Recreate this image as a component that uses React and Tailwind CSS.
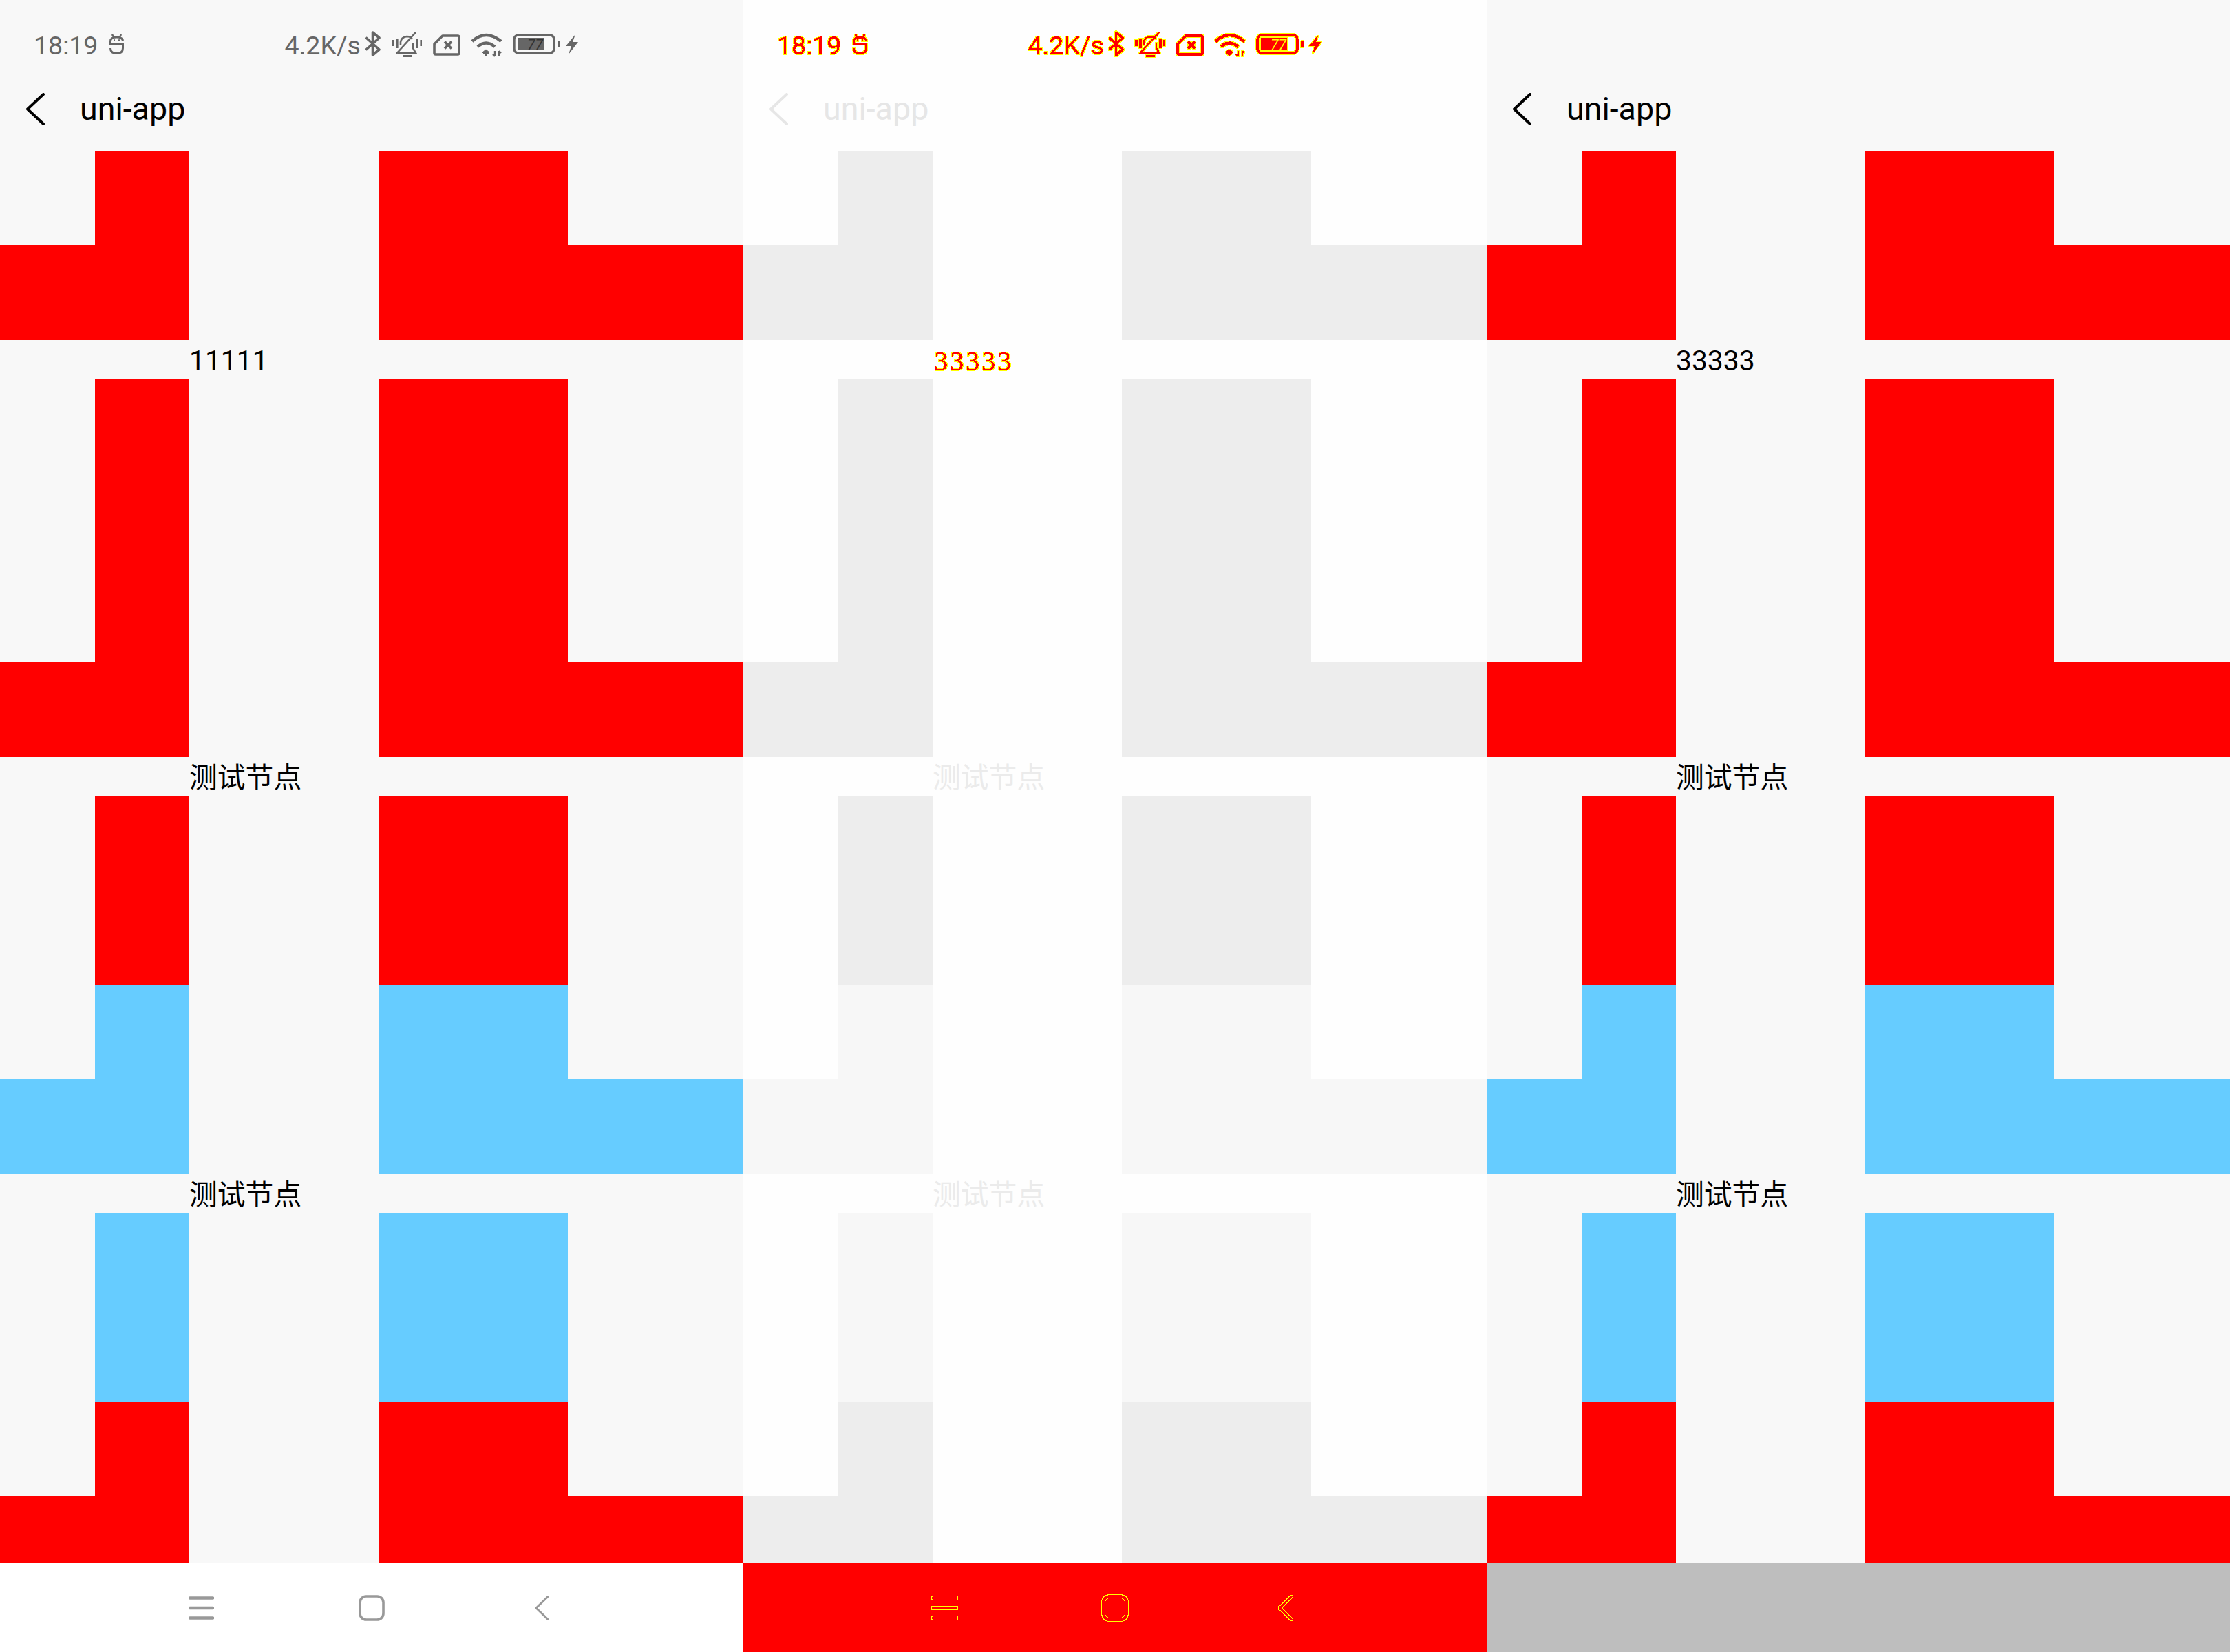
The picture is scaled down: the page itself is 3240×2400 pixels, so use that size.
const red = "bg-[#ff0000]";
const blue = "bg-[#66ccff]";
const fadedRed = "bg-[#ededed]";
const fadedBlue = "bg-[#f7f7f7]";

function Solid({ color, h }) {
  return (
    <div className={`flex ${h}`}>
      <div className="w-[275px] pl-[137.5px]"><div className={`h-full ${color}`} /></div>
      <div className={`ml-[275px] w-[275px] ${color}`} />
    </div>
  );
}

function Ell({ color, h, foot }) {
  return (
    <div className={`flex ${h}`}>
      <div className="flex w-[275px] flex-col">
        <div className="flex-1 pl-[137.5px]"><div className={`h-full ${color}`} /></div>
        <div className={`${foot} ${color}`} />
      </div>
      <div className="ml-[275px] flex w-[530px] flex-col">
        <div className={`w-[275px] flex-1 ${color}`} />
        <div className={`${foot} ${color}`} />
      </div>
    </div>
  );
}

function Label({ children, className }) {
  return <div className={`h-[56px] pl-[275px] text-[40.8px] leading-[60px] ${className}`}>{children}</div>;
}

function Chevron({ className }) {
  return (
    <svg width="28" height="47" viewBox="0 0 28 47" className={className} fill="none" stroke="currentColor" strokeWidth="4" strokeLinecap="round" strokeLinejoin="round">
      <path d="M26 2 L3 23.5 L26 45" />
    </svg>
  );
}

function Robot() {
  return (
    <svg width="23" height="29" viewBox="0 0 23 29" className="ml-[16px] mt-[50px]" fill="none" stroke="currentColor" strokeWidth="3">
      <path d="M5 0 L7 4 M18 0 L16 4" strokeWidth="2.5" />
      <path d="M2.5 13 V10 Q2.5 4 11.5 4 Q20.5 4 20.5 10" />
      <path d="M1 14 H22" />
      <path d="M20.5 14 V20 Q20.5 27.5 11.5 27.5 Q2.5 27.5 2.5 20" />
      <path d="M7 8.5 H9 M14 8.5 H16" strokeWidth="2.5" />
    </svg>
  );
}

function Bluetooth() {
  return (
    <svg width="25" height="37" viewBox="0 0 25 37" className="ml-[5px] mt-[45px]" fill="none" stroke="currentColor" strokeWidth="3.6" strokeLinejoin="round">
      <path d="M2.5 9.5 L22 27 L12.5 35 V2 L22 10 L2.5 27.5" />
    </svg>
  );
}

function Bell() {
  return (
    <svg width="44" height="37" viewBox="0 0 44 37" className="ml-[15px] mt-[47px]" fill="none" stroke="currentColor" strokeWidth="2.6">
      <path d="M2 11 V20 M8 9 V23 M37 9 V23 M43 11 V20" strokeWidth="3.2" />
      <path d="M13 19 V14 Q14 7 22 6 Q28 6 30 10 M31 15 V23 L35 30 H9" />
      <path d="M7 31 L35 0" />
      <path d="M16 34.5 H29" strokeWidth="3" />
    </svg>
  );
}

function Sim() {
  return (
    <svg width="40" height="31" viewBox="0 0 40 31" className="ml-[16px] mt-[50px]" fill="none" stroke="currentColor" strokeWidth="3.6" strokeLinejoin="round">
      <path d="M14 2 H36 Q38 2 38 4 V27 Q38 29 36 29 H4 Q2 29 2 27 V14 Z" />
      <path d="M17 10.5 L27 20.5 M27 10.5 L17 20.5" />
    </svg>
  );
}

function Wifi() {
  return (
    <svg width="47" height="35" viewBox="0 0 47 35" className="ml-[15px] mt-[48px]" fill="none" stroke="currentColor" strokeWidth="4.4">
      <path d="M2 12 Q22 -6 44 12" />
      <path d="M10 20 Q22 9 35 20" />
      <path d="M17 28 L22 24 L27 28 L22 33 Z" fill="currentColor" strokeWidth="1" />
      <path d="M35 26 V34 M32 31 L35 34 M41 34 V26 M44 29 L41 26" strokeWidth="2.4" />
    </svg>
  );
}

function Battery({ numberColor }) {
  return (
    <svg width="69" height="30" viewBox="0 0 69 30" className="ml-[14px] mt-[49px]" fill="none" stroke="currentColor" strokeWidth="3.4">
      <rect x="2" y="2" width="58" height="26" rx="6" />
      <rect x="7" y="6" width="38" height="18" fill="currentColor" stroke="none" />
      <rect x="65" y="10" width="4" height="10" rx="1.5" fill="currentColor" stroke="none" />
      <text x="21" y="23" fontSize="21" fill={numberColor} stroke="none" fontStyle="italic" fontFamily="Roboto, sans-serif">77</text>
    </svg>
  );
}

function Bolt() {
  return (
    <svg width="20" height="29" viewBox="0 0 20 29" className="ml-[7px] mt-[50px]" fill="currentColor">
      <path d="M15 0 L1 17 H9 L5 29 L19 11 H11 Z" />
    </svg>
  );
}

function StatusContent({ numberColor }) {
  return (
    <>
      <span className="ml-[49px] mt-[48px] text-[37.5px] leading-[36px]">18:19</span>
      <Robot />
      <span className="ml-[232px] mt-[48px] text-[37.5px] leading-[36px]">4.2K/s</span>
      <Bluetooth />
      <Bell />
      <Sim />
      <Wifi />
      <Battery numberColor={numberColor} />
      <Bolt />
    </>
  );
}

function NavIcons() {
  return (
    <>
      <svg width="37" height="34" viewBox="0 0 37 34" className="ml-[274px]" fill="none" stroke="currentColor" strokeWidth="4.4" strokeLinecap="round">
        <path d="M2 2.5 H35 M2 17 H35 M2 31.5 H35" />
      </svg>
      <svg width="38" height="38" viewBox="0 0 38 38" className="ml-[210px]" fill="none" stroke="currentColor" strokeWidth="3.6">
        <rect x="2" y="2" width="34" height="34" rx="9" />
      </svg>
      <svg width="21" height="36" viewBox="0 0 21 36" className="ml-[218px]" fill="none" stroke="currentColor" strokeWidth="3" strokeLinecap="round" strokeLinejoin="round">
        <path d="M19 1.5 L2 18 L19 34.5" />
      </svg>
    </>
  );
}

function Body({ first, labelClass, r, b }) {
  return (
    <>
      <Ell color={r} h="h-[275px]" foot="h-[138px]" />
      <Label className={first.cls}>{first.text}</Label>
      <Ell color={r} h="h-[550px]" foot="h-[138px]" />
      <Label className={labelClass}>测试节点</Label>
      <Solid color={r} h="h-[275px]" />
      <Ell color={b} h="h-[275px]" foot="h-[138px]" />
      <Label className={labelClass}>测试节点</Label>
      <Solid color={b} h="h-[275px]" />
      <Ell color={r} h="h-[233px]" foot="h-[96px]" />
      <div className="h-[1px] bg-white" />
    </>
  );
}

function Title({ className }) {
  return (
    <div className={`flex h-[119px] items-start ${className}`}>
      <Chevron className="ml-[37px] mt-[35px]" />
      <span className="ml-[51px] mt-[35px] text-[46.6px] leading-[46px]">uni-app</span>
    </div>
  );
}

export default function App() {
  return (
    <div className="flex h-[2400px] w-[3240px] font-[Roboto,'Noto_Sans_CJK_SC',sans-serif]">
      <svg width="0" height="0" className="absolute">
        <defs>
          <filter id="hard" x="-5%" y="-10%" width="110%" height="120%" colorInterpolationFilters="sRGB">
            <feComponentTransfer in="SourceGraphic" result="src">
              <feFuncA type="discrete" tableValues="0 1" />
            </feComponentTransfer>
            <feMorphology in="src" operator="dilate" radius="1" result="thick" />
            <feFlood floodColor="#ffff00" result="yellow" />
            <feComposite in="yellow" in2="thick" operator="in" result="outline" />
            <feMerge>
              <feMergeNode in="outline" />
              <feMergeNode in="src" />
            </feMerge>
          </filter>
        </defs>
      </svg>

      <div className="flex w-[1080px] flex-col bg-[#f8f8f8]">
        <div className="flex h-[100px] items-start text-[#666666]">
          <StatusContent numberColor="#333333" />
        </div>
        <Title className="text-black" />
        <Body first={{ text: "11111", cls: "text-black" }} labelClass="text-black" r={red} b={blue} />
        <div className="flex flex-1 items-center bg-white text-[#999999]">
          <NavIcons />
        </div>
      </div>

      <div className="flex w-[1080px] flex-col bg-[#fefefe]">
        <div className="flex h-[100px] items-start text-[#ff0000] [filter:url(#hard)]">
          <StatusContent numberColor="#ffff00" />
        </div>
        <Title className="text-[#e6e6e6]" />
        <Body
          first={{ text: <span className="ml-[2px] inline-block font-['Liberation_Serif',serif] tracking-[2.6px] text-[#ff0000] [filter:url(#hard)]">33333</span>, cls: "" }}
          labelClass="text-[#ebebeb]"
          r={fadedRed}
          b={fadedBlue}
        />
        <div className="flex-1 bg-[#ff0000]">
          <div className="flex h-full items-center text-[#ff0000] [filter:url(#hard)]">
            <NavIcons />
          </div>
        </div>
      </div>

      <div className="flex w-[1080px] flex-col bg-[#f8f8f8]">
        <div className="h-[100px]" />
        <Title className="text-black" />
        <Body first={{ text: "33333", cls: "text-black" }} labelClass="text-black" r={red} b={blue} />
        <div className="flex-1 bg-[#bebebe]" />
      </div>
    </div>
  );
}
